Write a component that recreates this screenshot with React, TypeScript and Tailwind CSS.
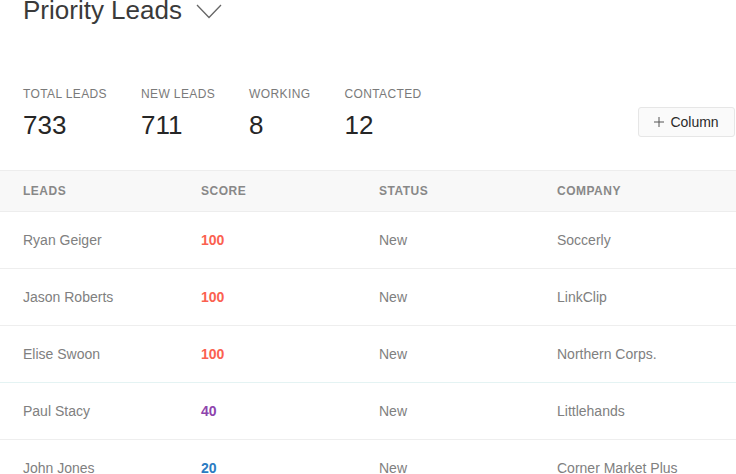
import React from 'react';

const stats = [
    { label: 'Total Leads', value: '733' },
    { label: 'New Leads', value: '711' },
    { label: 'Working', value: '8' },
    { label: 'Contacted', value: '12' },
];

const leads = [
    { name: 'Ryan Geiger', score: 100, status: 'New', company: 'Soccerly', line: 'border-[#eeeeee]' },
    { name: 'Jason Roberts', score: 100, status: 'New', company: 'LinkClip', line: 'border-[#eeeeee]' },
    { name: 'Elise Swoon', score: 100, status: 'New', company: 'Northern Corps.', line: 'border-[#e4f3f3]' },
    { name: 'Paul Stacy', score: 40, status: 'New', company: 'Littlehands', line: 'border-[#eeeeee]' },
    { name: 'John Jones', score: 20, status: 'New', company: 'Corner Market Plus', line: 'border-[#eeeeee]' },
];

function scoreColor(score: number) {
    if (score >= 100) return 'text-[#fb6150]';
    if (score >= 40) return 'text-[#8e44ad]';
    return 'text-[#2a7bc2]';
}

export default function App() {
    return (
        <div className="h-[474px] w-[736px] overflow-hidden bg-white font-['Liberation_Sans',Arial,sans-serif]">
            <header className="-mt-[3px] flex items-center pl-[23px]">
                <h1 className="text-[26px] leading-[26px] text-[#3a3a3a]">Priority Leads</h1>
                <svg className="ml-[14px] mt-[2px]" width="26" height="15" viewBox="0 0 26 15" fill="none">
                    <polyline points="1,1 13,13.5 25,1" stroke="#666" strokeWidth="1.3" />
                </svg>
            </header>

            <section className="mt-[63px] flex items-end justify-between pl-[23px] pr-px">
                <div className="flex gap-[34px]">
                    {stats.map((s) => (
                        <div key={s.label} className="flex flex-col">
                            <span className="text-[12px] leading-4 uppercase tracking-[0.38px] text-[#7a7a7a]">{s.label}</span>
                            <span className="mt-2 text-[26px] leading-[30px] text-[#262626]">{s.value}</span>
                        </div>
                    ))}
                </div>
                <button className="mb-[3px] flex h-[30px] w-[97px] items-center justify-center gap-[6px] rounded-[3px] border border-[#e6e6e6] bg-[#fafafa] text-[14px] text-[#2a2a2a]">
                    <svg width="10" height="10" viewBox="0 0 10 10">
                        <path d="M5 0v10M0 5h10" stroke="#555" strokeWidth="1" />
                    </svg>
                    Column
                </button>
            </section>

            <div className="mt-[30px]">
                <div className="grid h-[42px] grid-cols-[178px_178px_178px_1fr] items-center border-y border-[#ededed] bg-[#f8f8f8] pl-[23px] text-[12px] font-bold uppercase tracking-[0.5px] text-[#888]">
                    <span>Leads</span>
                    <span>Score</span>
                    <span>Status</span>
                    <span>Company</span>
                </div>
                {leads.map((l) => (
                    <div
                        key={l.name}
                        className={`grid h-[57px] grid-cols-[178px_178px_178px_1fr] items-center border-b pl-[23px] text-[14px] text-[#808080] ${l.line}`}
                    >
                        <span>{l.name}</span>
                        <span className={`font-bold ${scoreColor(l.score)}`}>{l.score}</span>
                        <span>{l.status}</span>
                        <span>{l.company}</span>
                    </div>
                ))}
            </div>
        </div>
    );
}
